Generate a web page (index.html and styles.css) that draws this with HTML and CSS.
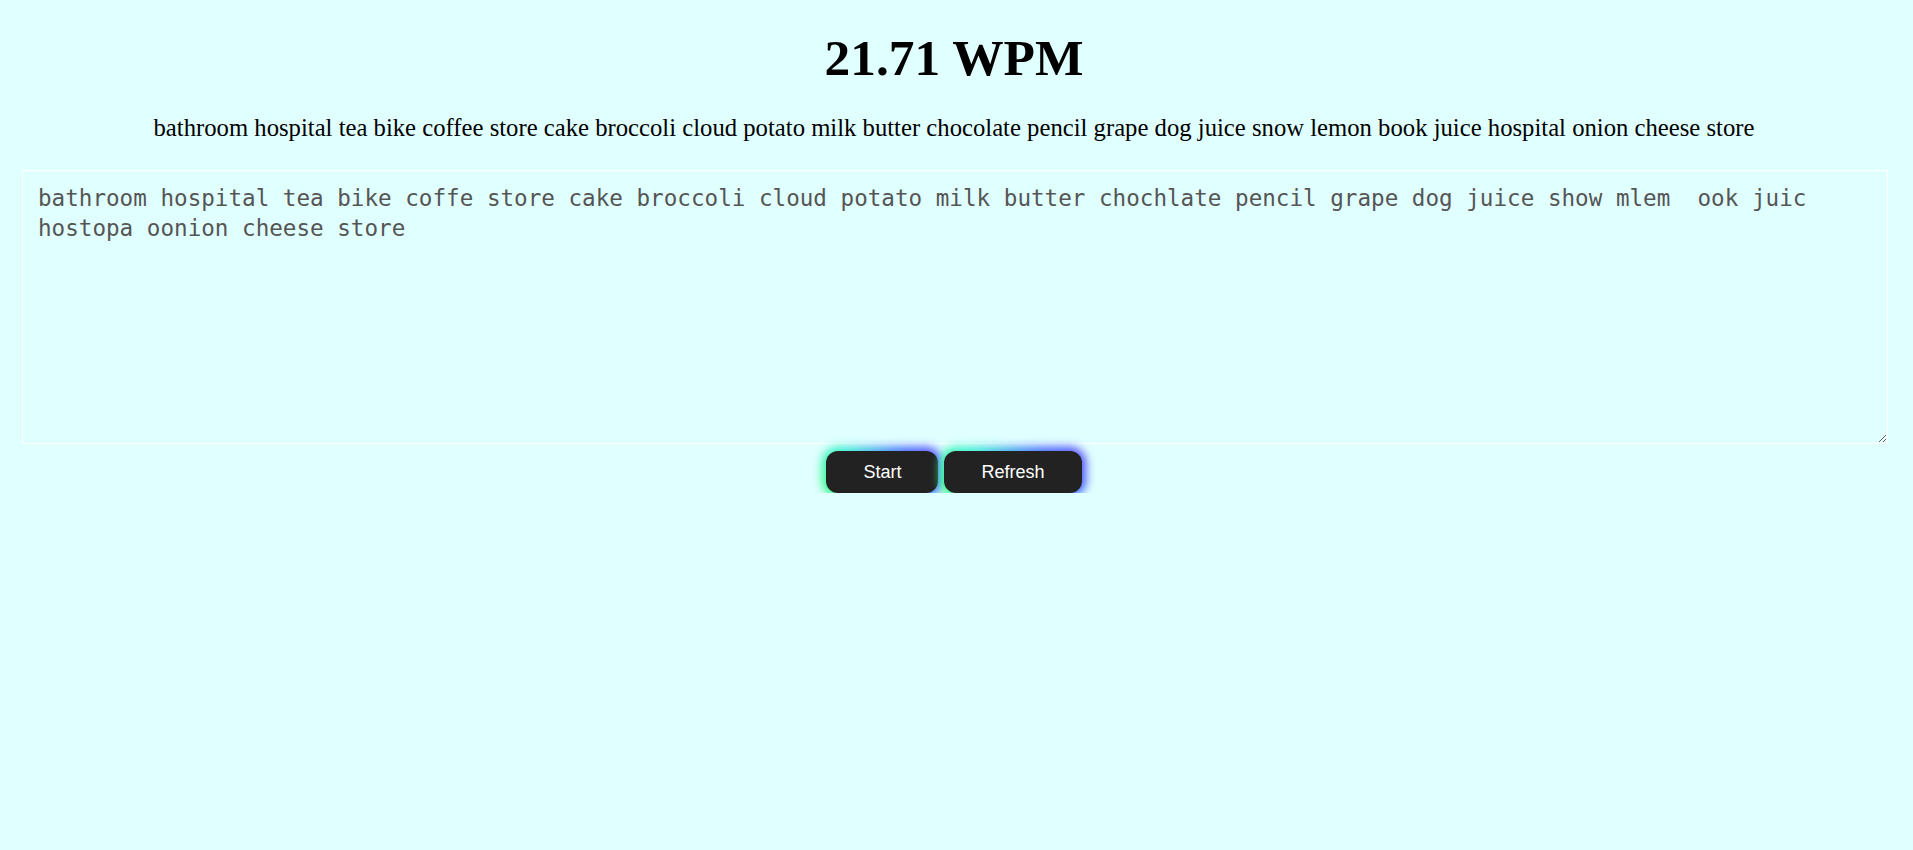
FILE: index.html
```html
<!DOCTYPE html>
<html lang="en">
<head>
<meta charset="utf-8">
<title>Typing Test</title>
<link rel="stylesheet" href="styles.css">
</head>
<body>
<main class="app">
  <h1 class="wpm">21.71 WPM</h1>
  <p class="prompt">bathroom hospital tea bike coffee store cake broccoli cloud potato milk butter chocolate pencil grape dog juice snow lemon book juice hospital onion cheese store</p>
  <textarea class="input" spellcheck="false">bathroom hospital tea bike coffe store cake broccoli cloud potato milk butter chochlate pencil grape dog juice show mlem  ook juic hostopa oonion cheese store</textarea>
  <div class="actions">
    <button class="btn" type="button"><span class="btn-label">Start</span></button>
    <button class="btn" type="button"><span class="btn-label">Refresh</span></button>
  </div>
</main>
</body>
</html>
```
FILE: styles.css
```css
html {
  background: #e0ffff;
}

body {
  margin: 0;
  padding: 0;
  font-family: "Liberation Serif", "Times New Roman", serif;
  color: #000;
}

.app {
  display: flex;
  flex-direction: column;
  padding: 30px 5px 0 0;
}

.wpm {
  margin: 0;
  font-size: 51.4px;
  line-height: 55px;
  font-weight: bold;
  text-align: center;
}

.prompt {
  margin: 29px 0 0;
  font-size: 24.7px;
  line-height: 28px;
  text-align: center;
}

.input {
  margin: 28px 20px 0 22px;
  height: 274px;
  box-sizing: border-box;
  padding: 13px 15px;
  background: transparent;
  border: 1px solid #ffffff;
  font-family: "DejaVu Sans Mono", "Liberation Mono", monospace;
  font-size: 22.6px;
  line-height: 29.5px;
  color: #555555;
  outline: none;
}

.actions {
  display: flex;
  justify-content: center;
  gap: 6px;
  margin-top: 7px;
}

.btn {
  position: relative;
  isolation: isolate;
  height: 42px;
  padding: 0 37px;
  border: none;
  border-radius: 12px;
  background: transparent;
  color: #ffffff;
  font-family: "Liberation Sans", Arial, sans-serif;
  font-size: 18px;
}

.btn::before {
  content: "";
  position: absolute;
  inset: -4px;
  border-radius: 16px;
  background: linear-gradient(45deg, #30ff70, #30f0d0 40%, #4060ff 75%, #5a40ff);
  filter: blur(5px);
  z-index: -2;
}

.btn::after {
  content: "";
  position: absolute;
  inset: 0;
  border-radius: 12px;
  background: #222222;
  z-index: -1;
}

.btn-label {
  position: relative;
}
```
